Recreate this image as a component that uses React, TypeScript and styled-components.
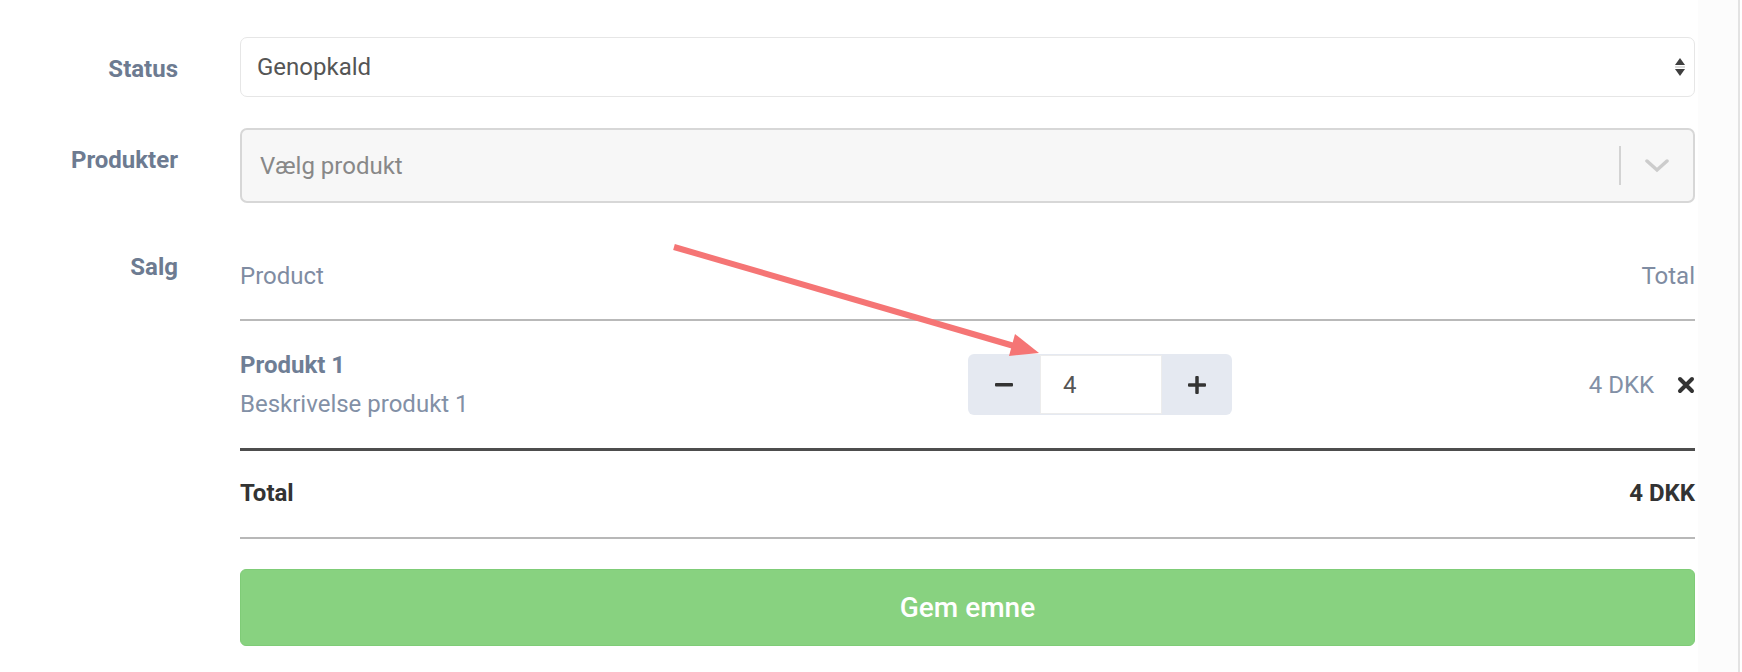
import React from 'react';
import styled, { createGlobalStyle } from 'styled-components';

const GlobalStyle = createGlobalStyle`
  html, body {
    margin: 0;
    padding: 0;
    background: #ffffff;
  }
  body {
    font-family: Roboto, "Liberation Sans", Arial, sans-serif;
    color: #333;
  }
`;

const Page = styled.div`
  position: relative;
  display: flex;
  width: 1742px;
  height: 672px;
  overflow: hidden;
`;

const FormArea = styled.div`
  width: 1698px;
  padding-top: 37px;
  display: grid;
  grid-template-columns: 178px 1455px;
  column-gap: 62px;
  align-content: start;
`;

const SideStrip = styled.div`
  width: 40px;
  background: #fcfcfc;
  border-right: 2px solid #e3e3e3;
`;

const Label = styled.div<{ $mt?: number }>`
  margin-top: ${(p) => p.$mt ?? 0}px;
  padding-top: 18px;
  text-align: right;
  font-size: 24px;
  line-height: 29px;
  font-weight: 700;
  color: #6d7b91;
`;

const Field = styled.div<{ $mt?: number }>`
  margin-top: ${(p) => p.$mt ?? 0}px;
`;

const StatusSelect = styled.div`
  height: 60px;
  box-sizing: border-box;
  border: 1px solid #e6e6e6;
  border-radius: 7px;
  background: #fff;
  display: flex;
  align-items: center;
  justify-content: space-between;
  padding: 0 7px 0 16px;
  font-size: 24px;
  color: #555;
`;

const ComboBox = styled.div`
  height: 75px;
  box-sizing: border-box;
  border: 2px solid #d7d7d7;
  border-radius: 7px;
  background: #f7f7f7;
  display: flex;
  align-items: center;
`;

const Placeholder = styled.div`
  flex: 1;
  padding-left: 18px;
  font-size: 24px;
  color: #888;
`;

const Separator = styled.div`
  width: 2px;
  height: 39px;
  background: #d3d3d3;
`;

const Indicator = styled.div`
  width: 72px;
  display: flex;
  justify-content: center;
  align-items: center;
`;

const SalesTable = styled.div`
  display: flex;
  flex-direction: column;
`;

const TableRow = styled.div<{ $border: string }>`
  display: grid;
  grid-template-columns: 728px 264px 1fr;
  align-items: center;
  border-bottom: ${(p) => p.$border};
`;

const HeaderRow = styled(TableRow)`
  padding: 28px 0 28px;
  font-size: 24px;
  line-height: 29px;
  color: #7f8ca2;
`;

const ItemRow = styled(TableRow)`
  padding: 30px 0 30px;
`;

const TotalRow = styled(TableRow)`
  padding: 28px 0 29px;
  font-size: 24px;
  line-height: 29px;
  font-weight: 700;
  color: #333;
`;

const RightCell = styled.div`
  grid-column: 3;
  display: flex;
  justify-content: flex-end;
  align-items: center;
  gap: 23px;
`;

const ProductName = styled.div`
  font-size: 24px;
  line-height: 29px;
  font-weight: 700;
  color: #6f7e95;
`;

const ProductDesc = styled.div`
  margin-top: 10px;
  font-size: 24px;
  line-height: 28px;
  color: #8290a6;
`;

const Stepper = styled.div`
  display: flex;
  height: 61px;
  width: 264px;
  border-radius: 6px;
  background: #e5e9f1;
  overflow: hidden;
`;

const StepButton = styled.div<{ $w: number }>`
  width: ${(p) => p.$w}px;
  display: flex;
  align-items: center;
  justify-content: center;
`;

const QtyInput = styled.div`
  width: 122px;
  margin: 1px 0;
  box-sizing: border-box;
  border: 1px solid #ececec;
  background: #fff;
  display: flex;
  align-items: center;
  padding-left: 22px;
  font-size: 24px;
  color: #555;
`;

const Amount = styled.div`
  font-size: 24px;
  color: #8290a6;
`;

const SaveButton = styled.button`
  grid-column: 2;
  margin-top: 30px;
  height: 77px;
  border: 1px solid #7fcc77;
  border-radius: 6px;
  background: #88d280;
  color: #fff;
  font-family: Roboto, "Liberation Sans", Arial, sans-serif;
  font-size: 28px;
  font-weight: 500;
`;

const Overlay = styled.svg`
  position: absolute;
  left: 0;
  top: 0;
  pointer-events: none;
`;

const SortIcon = () => (
  <svg width="14" height="22" viewBox="0 0 14 22">
    <path d="M2 9 L7 2 L12 9 Z" fill="#3f3f3f" />
    <path d="M2 13 L7 20 L12 13 Z" fill="#3f3f3f" />
    <line x1="2" y1="11" x2="12" y2="11" stroke="#bbb" strokeWidth="1" />
  </svg>
);

const Chevron = () => (
  <svg width="24" height="14" viewBox="0 0 24 14">
    <path d="M2 2 L12 11 L22 2" fill="none" stroke="#cccccc" strokeWidth="3.5" strokeLinecap="round" />
  </svg>
);

const Minus = () => (
  <svg width="18" height="4" viewBox="0 0 18 4">
    <rect x="0" y="0" width="18" height="3.5" rx="1" fill="#333" />
  </svg>
);

const Plus = () => (
  <svg width="18" height="18" viewBox="0 0 18 18">
    <rect x="0" y="7.25" width="18" height="3.5" rx="1" fill="#333" />
    <rect x="7.25" y="0" width="3.5" height="18" rx="1" fill="#333" />
  </svg>
);

const Cross = () => (
  <svg width="18" height="18" viewBox="0 0 18 18">
    <path d="M3 3 L15 15 M15 3 L3 15" stroke="#333" strokeWidth="4" strokeLinecap="round" />
  </svg>
);

const App = () => {
  return (
    <>
      <GlobalStyle />
      <Page>
        <FormArea>
          <Label>Status</Label>
          <Field>
            <StatusSelect>
              <span>Genopkald</span>
              <SortIcon />
            </StatusSelect>
          </Field>

          <Label $mt={31}>Produkter</Label>
          <Field $mt={31}>
            <ComboBox>
              <Placeholder>Vælg produkt</Placeholder>
              <Separator />
              <Indicator>
                <Chevron />
              </Indicator>
            </ComboBox>
          </Field>

          <Label $mt={32}>Salg</Label>
          <Field $mt={31}>
            <SalesTable>
              <HeaderRow $border="2px solid #b9b9b9">
                <div>Product</div>
                <RightCell>Total</RightCell>
              </HeaderRow>
              <ItemRow $border="3px solid #4d4d4d">
                <div>
                  <ProductName>Produkt 1</ProductName>
                  <ProductDesc>Beskrivelse produkt 1</ProductDesc>
                </div>
                <Stepper>
                  <StepButton $w={72}>
                    <Minus />
                  </StepButton>
                  <QtyInput>4</QtyInput>
                  <StepButton $w={70}>
                    <Plus />
                  </StepButton>
                </Stepper>
                <RightCell>
                  <Amount>4 DKK</Amount>
                  <Cross />
                </RightCell>
              </ItemRow>
              <TotalRow $border="2px solid #b8b8b8">
                <div>Total</div>
                <RightCell>4 DKK</RightCell>
              </TotalRow>
            </SalesTable>
          </Field>

          <SaveButton>Gem emne</SaveButton>
        </FormArea>
        <SideStrip />

        {/* annotation arrow */}
        <Overlay width="1742" height="672" viewBox="0 0 1742 672">
          <line x1="674" y1="247" x2="1014" y2="346" stroke="#f57575" strokeWidth="6" />
          <path d="M1039 353 L1009 356 L1015 334 Z" fill="#f57575" />
        </Overlay>
      </Page>
    </>
  );
};

export default App;
